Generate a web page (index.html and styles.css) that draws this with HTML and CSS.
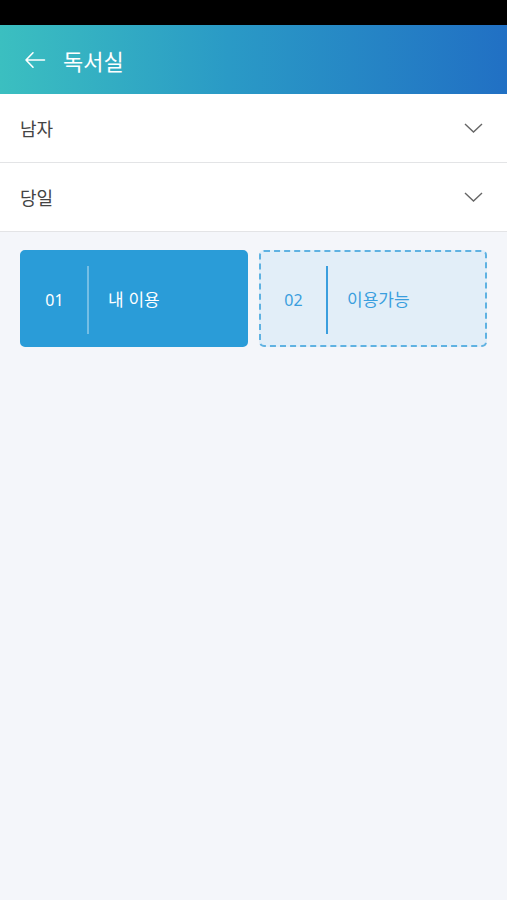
FILE: index.html
```html
<!DOCTYPE html>
<html lang="ko">
<head>
<meta charset="UTF-8">
<title>독서실</title>
<link rel="stylesheet" href="styles.css">
</head>
<body>
<div class="status"></div>
<div class="header">
    <svg class="back" width="22" height="18" viewBox="0 0 22 18">
        <path d="M20.5 9H2M9 1.8L2 9l7 7.2" fill="none" stroke="#fff" stroke-width="1.6" stroke-linecap="round" stroke-linejoin="round"/>
    </svg>
    <h1>독서실</h1>
</div>
<div class="select">
    <span>남자</span>
    <svg class="arrow" width="19" height="10" viewBox="0 0 19 10"><path d="M1 1l8.5 8 8.5-8" fill="none" stroke="#666" stroke-width="1.4"/></svg>
</div>
<div class="select">
    <span>당일</span>
    <svg class="arrow" width="19" height="10" viewBox="0 0 19 10"><path d="M1 1l8.5 8 8.5-8" fill="none" stroke="#666" stroke-width="1.4"/></svg>
</div>
<div class="tabs">
    <div class="tab on">
        <div class="num">01</div>
        <div class="line"></div>
        <div class="label">내 이용</div>
    </div>
    <div class="tab">
        <div class="num">02</div>
        <div class="line"></div>
        <div class="label">이용가능</div>
    </div>
</div>
</body>
</html>
```
FILE: styles.css
```css
*{
    margin:0;
    padding:0;
    box-sizing:border-box;
}
html,body{
    height:100%;
}
body{
    background:#f4f6fa;
    font-family:"Noto Sans","Noto Sans CJK KR",sans-serif;
}
.status{
    height:25px;
    background:#000;
}
.header{
    height:69px;
    display:flex;
    align-items:center;
    padding-left:24px;
    background:linear-gradient(to right,#3bbfc0,#2a9ac6 45%,#2170c4);
}
.back{
    margin-right:17px;
}
.header h1{
    color:#fff;
    font-size:22px;
    font-weight:400;
    font-family:"Noto Sans CJK KR",sans-serif;
}
.select{
    height:69px;
    display:flex;
    align-items:center;
    justify-content:space-between;
    padding:0 24px 0 20px;
    background:#fff;
    border-bottom:1px solid #e3e4e6;
    font-family:"Noto Sans CJK KR",sans-serif;
    font-size:18px;
    color:#444;
}
.tabs{
    display:flex;
    gap:11px;
    padding:18px 20px;
}
.tab{
    flex:1;
    height:97px;
    display:flex;
    align-items:center;
    border-radius:5px;
    border:2px dashed #5fb2e2;
    background:#e2eef8;
    color:#3a9ede;
}
.tab.on{
    border:2px solid #2a9cd8;
    background:#2a9cd8;
    color:#fff;
}
.num{
    width:65px;
    padding-top:2px;
    text-align:center;
    font-size:16px;
}
.line{
    width:2px;
    height:68px;
    margin-top:3px;
    background:#3a9ede;
}
.tab.on .line{
    background:rgba(255,255,255,0.35);
}
.label{
    padding-left:19px;
    font-size:17px;
    font-family:"Noto Sans CJK KR",sans-serif;
}
```
